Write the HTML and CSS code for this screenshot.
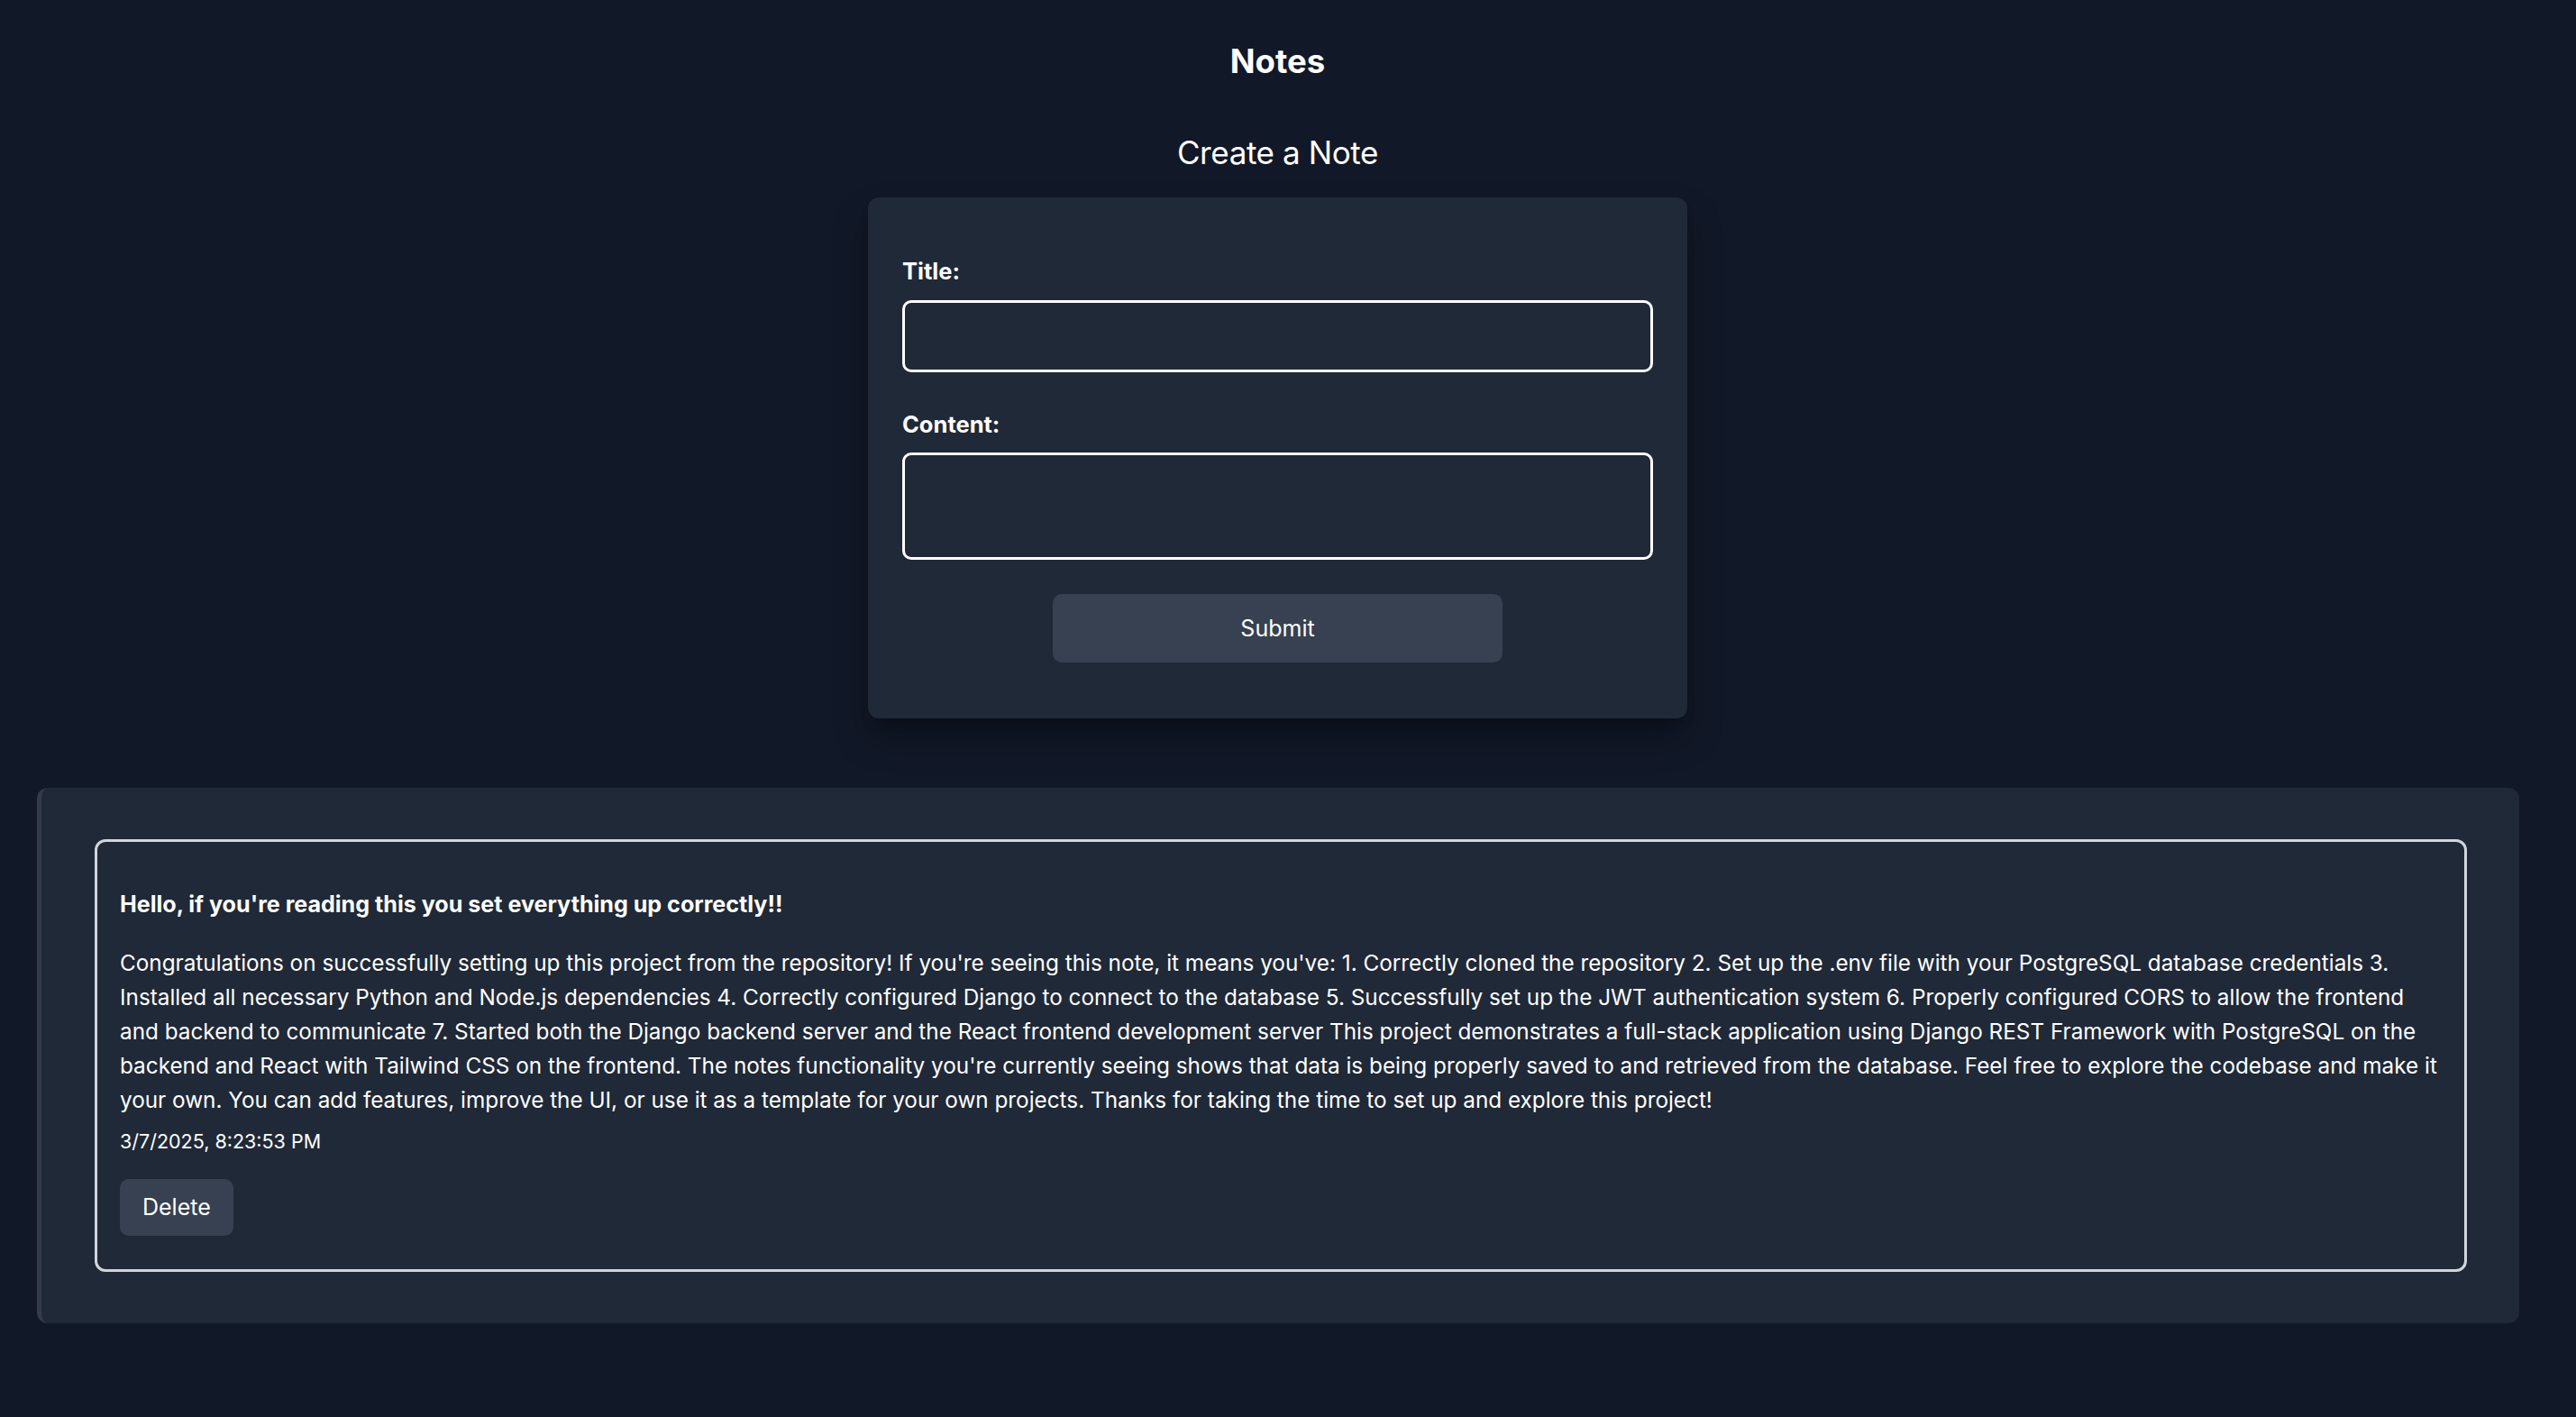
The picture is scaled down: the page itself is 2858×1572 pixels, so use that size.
FILE: index.html
```html
<!DOCTYPE html>
<html lang="en">
<head>
<meta charset="utf-8">
<title>Notes</title>
<link rel="stylesheet" href="styles.css">
</head>
<body>
<div class="page">
  <h1 class="page-title">Notes</h1>
  <h2 class="section-title">Create a Note</h2>
  <form class="note-form">
    <label class="field-label" for="title">Title:</label>
    <input class="field-input" id="title" type="text">
    <label class="field-label content-label" for="content">Content:</label>
    <textarea class="field-textarea" id="content"></textarea>
    <div class="submit-row">
      <button class="submit-btn" type="button">Submit</button>
    </div>
  </form>
  <section class="notes-list">
    <article class="note-card">
      <p class="note-title">Hello, if you're reading this you set everything up correctly!!</p>
      <p class="note-body">Congratulations on successfully setting up this project from the repository! If you're seeing this note, it means you've: 1. Correctly cloned the repository 2. Set up the .env file with your PostgreSQL database credentials 3. Installed all necessary Python and Node.js dependencies 4. Correctly configured Django to connect to the database 5. Successfully set up the JWT authentication system 6. Properly configured CORS to allow the frontend and backend to communicate 7. Started both the Django backend server and the React frontend development server This project demonstrates a full-stack application using Django REST Framework with PostgreSQL on the backend and React with Tailwind CSS on the frontend. The notes functionality you're currently seeing shows that data is being properly saved to and retrieved from the database. Feel free to explore the codebase and make it your own. You can add features, improve the UI, or use it as a template for your own projects. Thanks for taking the time to set up and explore this project!</p>
      <p class="note-date">3/7/2025, 8:23:53 PM</p>
      <button class="delete-btn" type="button">Delete</button>
    </article>
  </section>
</div>
</body>
</html>
```

FILE: styles.css
```css
html, body {
  margin: 0;
  padding: 0;
  background: #111827;
}

body {
  font-family: Inter, "Noto Sans", "Liberation Sans", sans-serif;
  color: #ffffff;
  min-height: 1572px;
}

.page {
  width: 2835px;
  padding-top: 43px;
  display: flex;
  flex-direction: column;
  align-items: center;
}

.page-title {
  margin: 0;
  font-size: 36.5px;
  line-height: 51px;
  font-weight: 700;
}

.section-title {
  margin: 50px 0 0;
  font-size: 35px;
  line-height: 51px;
  font-weight: 400;
  letter-spacing: -0.4px;
}

.note-form {
  margin-top: 24px;
  width: 909px;
  box-sizing: border-box;
  padding: 64px 38px 62px;
  background: #1f2937;
  border-radius: 12px;
  box-shadow: 0 22px 40px -4px rgba(0, 0, 0, 0.35), 0 8px 14px -6px rgba(0, 0, 0, 0.25);
  display: flex;
  flex-direction: column;
}

.field-label {
  display: block;
  font-size: 25.5px;
  line-height: 36.5px;
  font-weight: 700;
  margin-bottom: 13px;
}

.content-label {
  margin-top: 40px;
}

.field-input,
.field-textarea {
  display: block;
  box-sizing: border-box;
  width: 100%;
  margin: 0;
  border: 3px solid #ffffff;
  border-radius: 10px;
  background: transparent;
  color: #ffffff;
  font-family: inherit;
  font-size: 29px;
  outline: none;
}

.field-input {
  height: 80px;
}

.field-textarea {
  height: 119px;
  resize: none;
}

.submit-row {
  display: flex;
  justify-content: center;
  margin-top: 38px;
}

.submit-btn {
  width: 499px;
  height: 76px;
  border: none;
  border-radius: 10px;
  background: #374151;
  color: #ffffff;
  font-family: inherit;
  font-size: 25px;
  font-weight: 400;
}

.notes-list {
  margin-top: 77px;
  align-self: flex-start;
  margin-left: 41px;
  width: 2754px;
  box-sizing: border-box;
  padding: 57px 58px 57px 59px;
  background: #1f2937;
  border-left: 5px solid #343c4b;
  border-radius: 12px;
}

.note-card {
  border: 3px solid #d1d5db;
  border-radius: 12px;
  padding: 51px 25px 37px;
}

.note-title {
  margin: 0;
  font-size: 25.1px;
  line-height: 36.5px;
  font-weight: 700;
}

.note-body {
  margin: 27px 0 0;
  font-size: 24.3px;
  line-height: 38px;
  font-weight: 400;
}

.note-date {
  margin: 13px 0 0;
  font-size: 21.5px;
  line-height: 29px;
}

.delete-btn {
  display: block;
  margin-top: 27px;
  height: 63px;
  padding: 0 25px;
  border: none;
  border-radius: 10px;
  background: #374151;
  color: #ffffff;
  font-family: inherit;
  font-size: 25px;
  line-height: 36.5px;
}
```
